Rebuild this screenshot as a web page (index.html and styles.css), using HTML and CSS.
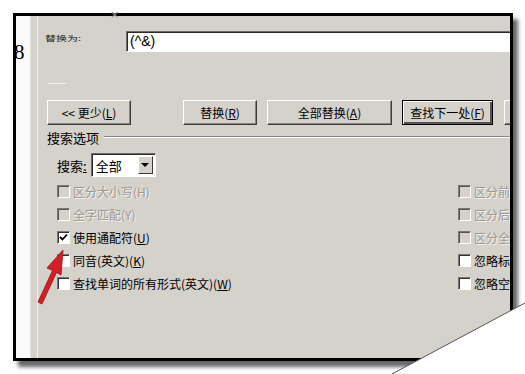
FILE: index.html
```html
<!DOCTYPE html>
<html lang="zh-CN">

<head>
    <meta charset="UTF-8">
    <meta name="viewport" content="width=device-width, initial-scale=1.0">
    <title>查找和替换</title>

    <link rel="stylesheet" href="styles.css">
</head>

<body>
    <div class="frame">
        <div class="strip"></div>
        <div class="dialog">
            <div class="find-row">
                <span class="find-label">替换为:</span>
                <div class="text-box">(^&amp;)</div>
            </div>
            <div class="dash"></div>
            <div class="buttons">
                <div class="btn btn-less">&lt;&lt; 更少(<u>L</u>)</div>
                <div class="btn btn-replace">替换(<u>R</u>)</div>
                <div class="btn btn-all">全部替换(<u>A</u>)</div>
                <div class="btn btn-next">查找下一处(<u>F</u>)</div>
                <div class="btn btn-cancel"></div>
            </div>
            <div class="group-title">
                <span>搜索选项</span>
                <div class="etched"></div>
            </div>
            <div class="search-row">
                <span>搜索<u>:</u></span>
                <div class="select">
                    <span class="select-text">全部</span>
                    <div class="select-btn"><span class="tri"></span></div>
                </div>
            </div>
            <div class="options">
                <div class="opt disabled"><span class="box"></span>区分大小写(H)</div>
                <div class="opt disabled"><span class="box"></span>区分前缀(X)</div>
                <div class="opt disabled"><span class="box"></span>全字匹配(Y)</div>
                <div class="opt disabled"><span class="box"></span>区分后缀(T)</div>
                <div class="opt">
                    <span class="box">
                        <svg width="9" height="9" viewBox="0 0 9 9"><path d="M1 4 L3.5 6.5 L8 1.5" fill="none" stroke="#000" stroke-width="1.8"/></svg>
                    </span>使用通配符(<u>U</u>)
                </div>
                <div class="opt disabled"><span class="box"></span>区分全/半角(M)</div>
                <div class="opt"><span class="box"></span>同音(英文)(<u>K</u>)</div>
                <div class="opt"><span class="box"></span>忽略标点符号(<u>S</u>)</div>
                <div class="opt"><span class="box"></span>查找单词的所有形式(英文)(<u>W</u>)</div>
                <div class="opt"><span class="box"></span>忽略空格(<u>W</u>)</div>
            </div>
        </div>
    </div>

    <span class="digit">8</span>
    <span class="speck">×</span>

    <svg class="arrow" width="80" height="70" viewBox="30 245 40 65">
        <polygon points="63,250 61,275 56.5,272.5 42,304 38,302 52.5,270.5 47,268" fill="#d41f26" stroke="#9c1016" stroke-width="0.8" stroke-linejoin="round"/>
    </svg>

    <svg class="curl" width="525" height="374" viewBox="0 0 525 374">
        <polygon points="392,374 525,303 525,374" fill="#fff"/>
        <line x1="392" y1="374" x2="525" y2="303" stroke="#555" stroke-width="1"/>
    </svg>
</body>

</html>
```

FILE: styles.css
```css
* {
    margin: 0;
    padding: 0;
    box-sizing: border-box;
}

body {
    width: 525px;
    height: 374px;
    overflow: hidden;
    position: relative;
    background-color: #fff;
    font-family: "Noto Sans CJK SC", "Liberation Sans", sans-serif;
    font-size: 12px;
    color: #000;
}

.frame {
    margin: 13px 0 0 13px;
    width: 500px;
    height: 348px;
    border: 3px solid #000;
    box-shadow: 5px 6px 4px rgba(0, 0, 0, 0.6);
    display: flex;
    overflow: hidden;
}

.strip {
    width: 22px;
    flex-shrink: 0;
    background: linear-gradient(to right, #fbfbfb 0 14px, #e4e2de 14px 15px, #d5d1cb 15px 21px, #f2f0ec 21px 22px);
}

.dialog {
    flex: 1;
    background-color: #d5d1cb;
    padding-left: 9px;
    overflow: hidden;
}

.find-row {
    display: flex;
    margin: 15px 0 0 -2px;
    height: 21px;
}

.find-label {
    width: 81px;
    flex-shrink: 0;
    font-size: 11px;
    line-height: 12px;
    margin-top: 3px;
    color: #222;
    transform: scaleY(0.6);
    transform-origin: top left;
}

.text-box {
    width: 420px;
    flex-shrink: 0;
    background-color: #fff;
    border: 1px solid;
    border-color: #6c6a66 #fff #fff #6c6a66;
    box-shadow: inset 1px 1px #2c2c2c;
    font-family: "Liberation Sans", sans-serif;
    font-size: 14px;
    line-height: 19px;
    padding-left: 3px;
}

.dash {
    width: 18px;
    height: 1px;
    margin: 31px 0 0 1px;
    background-color: #f4f3f0;
}

.buttons {
    display: flex;
    margin-top: 16px;
    height: 25px;
}

.btn {
    height: 25px;
    flex-shrink: 0;
    display: flex;
    align-items: center;
    justify-content: center;
    border: 1px solid;
    border-color: #fff #3c3c3c #3c3c3c #fff;
    box-shadow: inset -1px -1px #86847f;
    margin-right: 10px;
}

.btn-less {
    width: 84px;
    margin-right: 52px;
}

.btn-replace {
    width: 74px;
}

.btn-all {
    width: 125px;
}

.btn-next {
    width: 91px;
    margin-right: 11px;
    border: 1px solid #000;
    box-shadow: inset 1px 1px #fff, inset -2px -2px #56544f;
}

.btn-cancel {
    width: 60px;
}

.group-title {
    display: flex;
    align-items: center;
    margin-top: 5px;
    height: 14px;
    font-size: 13px;
}

.etched {
    flex: 1;
    height: 2px;
    margin-left: 5px;
    border-top: 1px solid #8a8884;
    border-bottom: 1px solid #fff;
}

.search-row {
    display: flex;
    align-items: center;
    margin: 9px 0 0 10px;
    height: 24px;
    font-size: 13px;
}

.search-row u {
    margin-right: 4px;
}

.select {
    width: 65px;
    height: 24px;
    display: flex;
    align-items: center;
    background-color: #fff;
    border: 1px solid;
    border-color: #6c6a66 #fff #fff #6c6a66;
    box-shadow: inset 1px 1px #2c2c2c;
    padding: 2px;
}

.select-text {
    flex: 1;
    padding-left: 2px;
    font-size: 13px;
}

.select-btn {
    width: 15px;
    height: 18px;
    display: flex;
    align-items: center;
    justify-content: center;
    background-color: #d5d1cb;
    border: 1px solid;
    border-color: #fff #3c3c3c #3c3c3c #fff;
}

.tri {
    width: 0;
    height: 0;
    border-left: 4px solid transparent;
    border-right: 4px solid transparent;
    border-top: 4px solid #000;
}

.options {
    display: grid;
    grid-template-columns: 401px 200px;
    grid-auto-rows: 23px;
    margin: 3px 0 0 10px;
}

.opt {
    display: flex;
    align-items: center;
    white-space: nowrap;
}

.box {
    width: 13px;
    height: 13px;
    margin-right: 3px;
    flex-shrink: 0;
    display: flex;
    align-items: center;
    justify-content: center;
    background-color: #fff;
    border: 1px solid;
    border-color: #7a7873 #fff #fff #7a7873;
    box-shadow: inset 1px 1px #333;
}

.disabled {
    color: #9c9994;
    text-shadow: 1px 1px #f4f3f0;
}

.disabled .box {
    background-color: #d5d1cb;
    box-shadow: inset 1px 1px #56544f;
}

.digit {
    position: absolute;
    left: 14px;
    top: 40px;
    font-family: "Liberation Serif", serif;
    font-size: 21px;
    line-height: 24px;
}

.speck {
    position: absolute;
    left: 110px;
    top: 8px;
    font-family: "DejaVu Sans", sans-serif;
    font-size: 11px;
    color: #9a9893;
}

.arrow {
    position: absolute;
    left: 30px;
    top: 245px;
    width: 40px;
    height: 65px;
}

.curl {
    position: absolute;
    left: 0;
    top: 0;
}
```
